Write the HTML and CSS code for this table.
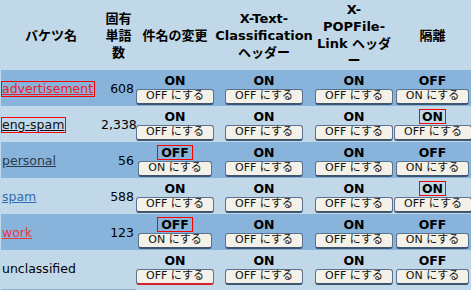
FILE: index.html
```html
<!DOCTYPE html>
<html lang="ja">
<head>
<meta charset="utf-8">
<title>バケツ</title>
<link rel="stylesheet" href="styles.css">
</head>
<body>
<table class="buckets">
  <colgroup>
    <col class="c-name">
    <col class="c-count">
    <col class="c-subj">
    <col class="c-xtc">
    <col class="c-xpl">
    <col class="c-quar">
  </colgroup>
  <thead>
    <tr>
      <th>バケツ名</th>
      <th>固有<br>単語<br>数</th>
      <th>件名の変更</th>
      <th>X-Text-<br>Classification<br>ヘッダー</th>
      <th>X-<br>POPFile-<br>Link ヘッダ<br>ー</th>
      <th>隔離</th>
    </tr>
  </thead>
  <tbody>
    <tr class="dark">
      <td class="name"><span class="tag marked"><a class="lnk red" href="#">advertisement</a></span></td>
      <td class="count">608</td>
      <td class="opt"><div class="state">ON</div><button class="btn">OFF にする</button></td>
      <td class="opt"><div class="state">ON</div><button class="btn">OFF にする</button></td>
      <td class="opt"><div class="state">ON</div><button class="btn">OFF にする</button></td>
      <td class="opt"><div class="state">OFF</div><button class="btn">ON にする</button></td>
    </tr>
    <tr>
      <td class="name"><span class="tag marked"><a class="lnk black" href="#">eng-spam</a></span></td>
      <td class="count">2,338</td>
      <td class="opt"><div class="state">ON</div><button class="btn">OFF にする</button></td>
      <td class="opt"><div class="state">ON</div><button class="btn">OFF にする</button></td>
      <td class="opt"><div class="state">ON</div><button class="btn">OFF にする</button></td>
      <td class="opt"><div class="state"><span class="flag on">ON</span></div><button class="btn">OFF にする</button></td>
    </tr>
    <tr class="dark">
      <td class="name"><span class="tag"><a class="lnk grey" href="#">personal</a></span></td>
      <td class="count">56</td>
      <td class="opt"><div class="state"><span class="flag off">OFF</span></div><button class="btn">ON にする</button></td>
      <td class="opt"><div class="state">ON</div><button class="btn">OFF にする</button></td>
      <td class="opt"><div class="state">ON</div><button class="btn">OFF にする</button></td>
      <td class="opt"><div class="state">OFF</div><button class="btn">ON にする</button></td>
    </tr>
    <tr>
      <td class="name"><span class="tag"><a class="lnk blue" href="#">spam</a></span></td>
      <td class="count">588</td>
      <td class="opt"><div class="state">ON</div><button class="btn">OFF にする</button></td>
      <td class="opt"><div class="state">ON</div><button class="btn">OFF にする</button></td>
      <td class="opt"><div class="state">ON</div><button class="btn">OFF にする</button></td>
      <td class="opt"><div class="state"><span class="flag on">ON</span></div><button class="btn">OFF にする</button></td>
    </tr>
    <tr class="dark">
      <td class="name"><span class="tag"><a class="lnk pink" href="#">work</a></span></td>
      <td class="count">123</td>
      <td class="opt"><div class="state"><span class="flag off">OFF</span></div><button class="btn">ON にする</button></td>
      <td class="opt"><div class="state">ON</div><button class="btn">OFF にする</button></td>
      <td class="opt"><div class="state">ON</div><button class="btn">OFF にする</button></td>
      <td class="opt"><div class="state">OFF</div><button class="btn">ON にする</button></td>
    </tr>
    <tr class="last">
      <td class="name"><span class="tag">unclassified</span></td>
      <td class="count"></td>
      <td class="opt"><div class="state">ON</div><button class="btn focus">OFF にする</button></td>
      <td class="opt"><div class="state">ON</div><button class="btn">OFF にする</button></td>
      <td class="opt"><div class="state">ON</div><button class="btn">OFF にする</button></td>
      <td class="opt"><div class="state">OFF</div><button class="btn">ON にする</button></td>
    </tr>
    <tr class="total">
      <td class="sum" colspan="2"></td>
      <td colspan="4"></td>
    </tr>
  </tbody>
</table>
</body>
</html>
```

FILE: styles.css
```css
html, body {
  margin: 0;
  padding: 0;
  background: #c0d8e8;
}

body {
  font-family: "DejaVu Sans", "Noto Sans CJK JP", sans-serif;
  font-size: 12.5px;
  color: #000;
  overflow: hidden;
}

.buckets {
  margin-left: 1px;
  border-collapse: collapse;
  border-spacing: 0;
  table-layout: fixed;
  width: 470px;
}

.c-name { width: 100px; }
.c-count { width: 35px; }
.c-subj { width: 78px; }
.c-xtc { width: 100px; }
.c-xpl { width: 80px; }
.c-quar { width: 77px; }

.buckets th {
  font-weight: bold;
  font-size: 13px;
  line-height: 17px;
  padding: 1px 0;
  height: 68px;
  text-align: center;
  vertical-align: middle;
}

.buckets td {
  padding: 2px 0 1px;
  height: 33px;
  vertical-align: middle;
}

.dark td {
  background: #88b4dc;
}

.name {
  text-align: left;
  white-space: nowrap;
}

.tag {
  display: inline-block;
  border: 1px solid transparent;
  padding: 0 1px 0 0;
  line-height: 14px;
}

.tag.marked {
  border-color: #f00;
}

.lnk { text-decoration: underline; }
.lnk.red { color: #ee1b22; }
.lnk.black { color: #111; }
.lnk.grey { color: #2c3a4a; }
.lnk.blue { color: #2f6cb0; }
.lnk.pink { color: #e43a3e; }

.buckets td.count {
  text-align: right;
  padding-right: 2px;
}

.opt {
  text-align: center;
  white-space: nowrap;
}

.state {
  font-weight: bold;
  font-size: 12.5px;
  line-height: 15px;
  height: 15px;
}

.flag {
  display: inline-block;
  box-sizing: border-box;
  border: 1px solid #f00;
  height: 15px;
  padding: 0;
  line-height: 13px;
  text-align: center;
  vertical-align: top;
}

.flag.on { width: 27px; }
.flag.off { width: 36px; }

.btn {
  display: inline-block;
  box-sizing: border-box;
  margin: 1px 0 0;
  height: 16px;
  padding: 0 9px;
  white-space: nowrap;
  font-family: "DejaVu Sans", "Noto Sans CJK JP", sans-serif;
  font-size: 11px;
  line-height: 12px;
  color: #111;
  background: #f3f1e8;
  border: 1px solid #5a7290;
  border-bottom: 2px solid #3e5570;
  border-radius: 3px;
  vertical-align: top;
}

.btn.focus {
  border-bottom-color: #d0222c;
}

.buckets .total td {
  height: 10px;
  padding: 0;
  border-top: 3px solid #c0d8e8;
}

.buckets .total .sum {
  background: #88b4dc;
}
```
